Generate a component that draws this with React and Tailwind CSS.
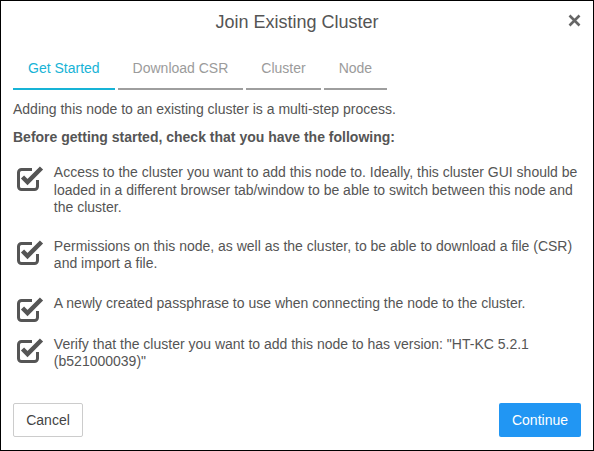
import React from 'react';

function CheckIcon() {
  return (
    <svg width="28" height="27" viewBox="0 0 28 27" className="shrink-0" fill="none">
      <path
        d="M16 4.5H5.5a3 3 0 0 0-3 3V21.5a3 3 0 0 0 3 3H18.5a3 3 0 0 0 3-3V15"
        stroke="#555"
        strokeWidth="3"
      />
      <path d="M6.5 12L11.5 17L25.5 3" stroke="#555" strokeWidth="4.5" strokeLinejoin="miter" />
    </svg>
  );
}

const tabs = [
  { label: 'Get Started', active: true },
  { label: 'Download CSR' },
  { label: 'Cluster' },
  { label: 'Node' },
];

const items = [
  {
    mt: 'mt-[17px]',
    text: 'Access to the cluster you want to add this node to. Ideally, this cluster GUI should be loaded in a different browser tab/window to be able to switch between this node and the cluster.',
  },
  {
    mt: 'mt-[21px]',
    text: 'Permissions on this node, as well as the cluster, to be able to download a file (CSR) and import a file.',
  },
  {
    mt: 'mt-[22px]',
    text: 'A newly created passphrase to use when connecting the node to the cluster.',
  },
  {
    mt: 'mt-[13px]',
    text: 'Verify that the cluster you want to add this node to has version: "HT-KC 5.2.1 (b521000039)"',
  },
];

export default function App() {
  return (
    <div
      className="w-[594px] h-[451px] border border-black bg-white flex flex-col text-[#555]"
      style={{ fontFamily: '"Liberation Sans", Arial, sans-serif' }}
    >
      <div className="relative h-[43px] flex items-center justify-center">
        <h2 className="text-[18px] text-[#555]">Join Existing Cluster</h2>
        <button className="absolute right-[12px] top-[13px]">
          <svg width="13" height="13" viewBox="0 0 13 13">
            <path d="M1.5 1.5L11.5 11.5M11.5 1.5L1.5 11.5" stroke="#666" strokeWidth="2.6" />
          </svg>
        </button>
      </div>

      <div className="flex gap-[3px] pl-[12px] pt-[14px]">
        {tabs.map((t) => (
          <div
            key={t.label}
            className={`px-[15px] text-center text-[14px] leading-[20px] pb-[10px] border-b-2 ${
              t.active ? 'text-[#17b3d6] border-[#17b3d6]' : 'text-[#9b9b9b] border-[#9e9e9e]'
            }`}
          >
            {t.label}
          </div>
        ))}
      </div>

      <div className="px-[12px] text-[14px]">
        <p className="mt-[9px] leading-[20px]">Adding this node to an existing cluster is a multi-step process.</p>
        <p className="mt-[8px] leading-[20px] font-bold">Before getting started, check that you have the following:</p>
        {items.map((it, i) => (
          <div key={i} className={`${it.mt} flex items-start`}>
            <div className="ml-[3px] mt-[1px] w-[38px]">
              <CheckIcon />
            </div>
            <p className="leading-[17.5px] w-[529px]">{it.text}</p>
          </div>
        ))}
      </div>

      <div className="mt-auto flex justify-between px-[12px] pb-[13px]">
        <button className="w-[70px] h-[34px] border border-[#ccc] rounded-[2px] text-[14px] text-[#444] bg-white">
          Cancel
        </button>
        <button className="w-[82px] h-[34px] rounded-[2px] text-[14px] text-white bg-[#2196f3]">Continue</button>
      </div>
    </div>
  );
}
